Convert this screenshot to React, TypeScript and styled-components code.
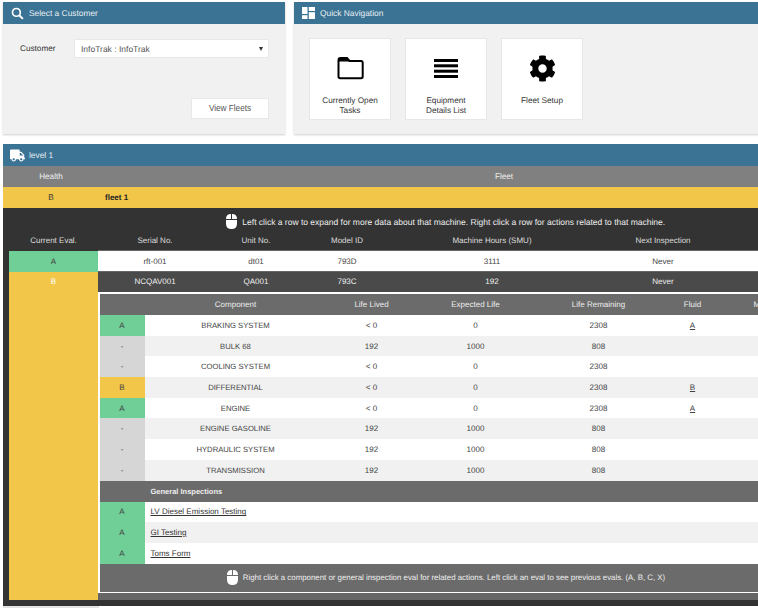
import styled, { createGlobalStyle } from 'styled-components'
import { FaCog, FaTruck } from 'react-icons/fa'

type Grade = 'A' | 'B' | '-'

const gradeColors: Record<Grade, string> = {
  A: '#6fcf97',
  B: '#f2c649',
  '-': '#d6d6d6',
}

const components = [
  { eval: 'A' as Grade, name: 'BRAKING SYSTEM', lived: '< 0', expected: '0', remaining: '2308', fluid: 'A' },
  { eval: '-' as Grade, name: 'BULK 68', lived: '192', expected: '1000', remaining: '808', fluid: '' },
  { eval: '-' as Grade, name: 'COOLING SYSTEM', lived: '< 0', expected: '0', remaining: '2308', fluid: '' },
  { eval: 'B' as Grade, name: 'DIFFERENTIAL', lived: '< 0', expected: '0', remaining: '2308', fluid: 'B' },
  { eval: 'A' as Grade, name: 'ENGINE', lived: '< 0', expected: '0', remaining: '2308', fluid: 'A' },
  { eval: '-' as Grade, name: 'ENGINE GASOLINE', lived: '192', expected: '1000', remaining: '808', fluid: '' },
  { eval: '-' as Grade, name: 'HYDRAULIC SYSTEM', lived: '192', expected: '1000', remaining: '808', fluid: '' },
  { eval: '-' as Grade, name: 'TRANSMISSION', lived: '192', expected: '1000', remaining: '808', fluid: '' },
]

const inspections = ['LV Diesel Emission Testing', 'GI Testing', 'Toms Form']

const GlobalStyle = createGlobalStyle`
  html, body {
    margin: 0;
    padding: 0;
    width: 758px;
    height: 608px;
    overflow: hidden;
    background: #fff;
    font-family: "Liberation Sans", Arial, sans-serif;
    font-size: 8.2px;
    color: #333;
    text-rendering: geometricPrecision;
  }
`

const Page = styled.div`
  width: 800px;
  height: 608px;
  padding: 2px 0 0 3px;
  box-sizing: border-box;
  overflow: hidden;
`

const TopRow = styled.div`
  display: flex;
  gap: 9px;
  margin-bottom: 10px;
`

const Panel = styled.section<{ $width: number }>`
  width: ${(p) => p.$width}px;
  height: 132px;
  background: #f1f1f1;
  box-shadow: 0 1px 2px rgba(0, 0, 0, 0.2);
`

const PanelHeader = styled.header`
  height: 22px;
  background: #3b7394;
  color: #e6eef3;
  display: flex;
  align-items: center;
  gap: 5px;
  padding-left: 8px;
  font-size: 8.4px;
`

const CustomerBody = styled.div`
  display: grid;
  grid-template-columns: 45px 195px;
  column-gap: 9px;
  padding: 15px 0 0 17px;
`

const FieldLabel = styled.label`
  line-height: 19px;
`

const SelectBox = styled.div`
  height: 19px;
  background: #fff;
  border: 1px solid #e8e8e8;
  box-sizing: border-box;
  display: flex;
  align-items: center;
  justify-content: space-between;
  padding: 0 5px 0 6px;
  color: #555;
  font-size: 8.5px;
`

const Caret = styled.span`
  width: 0;
  height: 0;
  border-left: 2.5px solid transparent;
  border-right: 2.5px solid transparent;
  border-top: 4px solid #333;
`

const ViewButton = styled.button`
  grid-column: 2;
  justify-self: end;
  width: 78px;
  height: 21px;
  margin-top: 40px;
  background: #fff;
  border: 1px solid #e8e8e8;
  font: inherit;
  color: #555;
  padding: 0;
`

const NavBody = styled.div`
  display: flex;
  gap: 14px;
  padding: 14px 0 0 15px;
`

const NavCard = styled.div`
  width: 82px;
  height: 82px;
  box-sizing: border-box;
  background: #fff;
  border: 1px solid #e6e6e6;
  display: flex;
  flex-direction: column;
  align-items: center;
  color: #333;
  text-align: center;
  line-height: 10px;
`

const NavIcon = styled.div`
  height: 28px;
  margin: 15px 0 14px;
  display: flex;
  align-items: center;
  justify-content: center;
  color: #000;
`

const FleetPanel = styled.section`
  width: 790px;
  height: 462px;
  position: relative;
`

const LevelHeader = styled(PanelHeader)`
  gap: 4px;
  padding-left: 7px;
`

const HealthRow = styled.div<{ $bg: string; $color: string }>`
  display: grid;
  grid-template-columns: 96px 1fr;
  height: 21px;
  background: ${(p) => p.$bg};
  color: ${(p) => p.$color};
  align-items: center;
  text-align: center;
`

const FleetTitle = styled.span`
  font-weight: bold;
  font-size: 8px;
  text-align: left;
  padding-left: 6px;
  color: #222;
`

const FleetHeading = styled.span`
  padding-left: 116px;
`

const DarkArea = styled.div`
  background: #333;
  padding: 0 0 6px 6px;
  height: 398px;
  box-sizing: border-box;
  display: grid;
  grid-template-columns: 89px 1fr;
  grid-template-rows: 43px 20.5px 20.5px 1fr;
  font-size: 8px;
`

const Notice = styled.div`
  height: 27px;
  display: flex;
  align-items: center;
  justify-content: center;
  gap: 5px;
  color: #eee;
  padding-left: 68px;
  font-size: 8.5px;
`

const HeadWrap = styled.div`
  grid-column: 1 / -1;
  display: flex;
  flex-direction: column;
`

const MachineCols = styled.div`
  display: grid;
  grid-template-columns: 114px 88px 94px 196px 146px 1fr;
  align-items: center;
  text-align: center;
`

const MachineHeadRow = styled.div`
  display: grid;
  grid-template-columns: 89px 1fr;
  height: 10px;
  align-items: center;
  text-align: center;
  color: #ddd;
`

const MachineRow = styled(MachineCols)<{ $dark?: boolean }>`
  height: 100%;
  background: ${(p) => (p.$dark ? '#4a4a4a' : '#fff')};
  color: ${(p) => (p.$dark ? '#eee' : '#444')};
  box-shadow: 0 -1px 0 #666;
`

const GradeCell = styled.div<{ $grade: Grade }>`
  background: ${(p) => gradeColors[p.$grade]};
  display: flex;
  align-items: center;
  justify-content: center;
  color: #444;
`

const BSideCell = styled.div`
  background: #f2c649;
  grid-row: 3 / 5;
  color: #fff;
  text-align: center;
  line-height: 20px;
`

const Detail = styled.div`
  background: #666;
  display: flex;
  flex-direction: column;
  padding-bottom: 7px;
`

const DetailFrame = styled.div`
  background: #6b6b6b;
  border-top: 2px solid #fff;
  border-left: 2px solid #fff;
  border-bottom: 1.5px solid #fff;
  margin-left: -0.5px;
  flex: 1;
  display: flex;
  flex-direction: column;
`

const CompCols = styled.div`
  display: grid;
  grid-template-columns: 45px 182px 90px 118px 128px 60px 92px;
  align-items: center;
  text-align: center;
  height: 20.7px;
`

const CompHead = styled(CompCols)`
  height: 21px;
  color: #eee;
  background: #6b6b6b;
`

const CompRow = styled(CompCols)<{ $even: boolean }>`
  background: ${(p) => (p.$even ? '#f1f1f1' : '#fff')};
  color: #444;

  & > ${GradeCell} {
    height: 100%;
  }
`

const CompName = styled.span`
  font-size: 7.7px;
`

const FluidLink = styled.span`
  text-decoration: underline;
`

const InspectHead = styled.div`
  height: 21px;
  background: #6b6b6b;
  color: #eee;
  font-weight: bold;
  font-size: 7.5px;
  display: flex;
  align-items: center;
  padding-left: 51px;
`

const InspectRow = styled.div<{ $even: boolean }>`
  display: grid;
  grid-template-columns: 45px 1fr;
  height: 20.7px;
  align-items: center;
  background: ${(p) => (p.$even ? '#f1f1f1' : '#fff')};

  & > ${GradeCell} {
    height: 100%;
  }
`

const InspectLink = styled.a`
  padding-left: 6px;
  color: #333;
  text-decoration: underline;
`

const DetailFooter = styled.div`
  flex: 1;
  background: #6b6b6b;
  color: #eee;
  display: flex;
  align-items: center;
  justify-content: center;
  gap: 5px;
  padding-right: 22px;
  font-size: 7.87px;
`

const StubBar = styled.div`
  position: absolute;
  left: 0;
  bottom: -2px;
  width: 96px;
  height: 2px;
  background: #e2e2e2;
`

const SearchIcon = () => (
  <svg width="13" height="13" viewBox="0 0 14 14" fill="none">
    <circle cx="5.8" cy="5.8" r="4.2" stroke="#fff" strokeWidth="1.8" />
    <path d="M8.8 8.8 L12.8 12.8" stroke="#fff" strokeWidth="2.2" />
  </svg>
)

const QuickIcon = () => (
  <svg width="13" height="12" viewBox="0 0 13 12" fill="#fff">
    <rect x="0" y="0" width="5.5" height="7" />
    <rect x="6.8" y="0" width="6.2" height="4" />
    <rect x="0" y="8.2" width="5.5" height="3.8" />
    <rect x="6.8" y="5.2" width="6.2" height="6.8" />
  </svg>
)

const FolderIcon = () => (
  <svg width="27" height="23" viewBox="0 0 27 23" fill="none">
    <path d="M1.5 5 V3 Q1.5 1 3.5 1 H10 L12.5 4 H24 Q25.7 4 25.7 6 V19.5 Q25.7 21.3 24 21.3 H3.3 Q1.5 21.3 1.5 19.5 Z" stroke="#000" strokeWidth="2" />
    <path d="M1.5 3 Q1.5 1 3.5 1 H10 L12.5 4.5 H1.5 Z" fill="#000" />
  </svg>
)

const ListIcon = () => (
  <svg width="24" height="19" viewBox="0 0 24 19" fill="#000">
    <rect x="0" y="0" width="24" height="3" />
    <rect x="0" y="5.3" width="24" height="3" />
    <rect x="0" y="10.7" width="24" height="3" />
    <rect x="0" y="16" width="24" height="3" />
  </svg>
)

const MouseIcon = () => (
  <svg width="11" height="15" viewBox="0 0 11 15">
    <path d="M0 5 Q0 0 5 0 V5 Z" fill="#fff" />
    <path d="M6 0 Q11 0 11 5 H6 Z" fill="#fff" />
    <path d="M0 6 H11 V9.5 Q11 15 5.5 15 Q0 15 0 9.5 Z" fill="#fff" />
  </svg>
)

export default function App() {
  return (
    <>
      <GlobalStyle />
      <Page>
        <TopRow>
          <Panel $width={282}>
            <PanelHeader>
              <SearchIcon />
              <span>Select a Customer</span>
            </PanelHeader>
            <CustomerBody>
              <FieldLabel>Customer</FieldLabel>
              <SelectBox>
                InfoTrak : InfoTrak
                <Caret />
              </SelectBox>
              <ViewButton>View Fleets</ViewButton>
            </CustomerBody>
          </Panel>
          <Panel $width={500}>
            <PanelHeader>
              <QuickIcon />
              <span>Quick Navigation</span>
            </PanelHeader>
            <NavBody>
              <NavCard>
                <NavIcon>
                  <FolderIcon />
                </NavIcon>
                Currently Open
                <br />
                Tasks
              </NavCard>
              <NavCard>
                <NavIcon>
                  <ListIcon />
                </NavIcon>
                Equipment
                <br />
                Details List
              </NavCard>
              <NavCard>
                <NavIcon>
                  <FaCog size={27} />
                </NavIcon>
                Fleet Setup
              </NavCard>
            </NavBody>
          </Panel>
        </TopRow>
        <FleetPanel>
          <LevelHeader>
            <FaTruck size={15} color="#fff" />
            <span>level 1</span>
          </LevelHeader>
          <HealthRow $bg="#808080" $color="#eee">
            <span>Health</span>
            <FleetHeading>Fleet</FleetHeading>
          </HealthRow>
          <HealthRow $bg="#f2c649" $color="#333">
            <span>B</span>
            <FleetTitle>fleet 1</FleetTitle>
          </HealthRow>
          <DarkArea>
            <HeadWrap>
              <Notice>
                <MouseIcon />
                Left click a row to expand for more data about that machine. Right click a row for actions related to that machine.
              </Notice>
              <MachineHeadRow>
                <span>Current Eval.</span>
                <MachineCols>
                  <span>Serial No.</span>
                  <span>Unit No.</span>
                  <span>Model ID</span>
                  <span>Machine Hours (SMU)</span>
                  <span>Next Inspection</span>
                </MachineCols>
              </MachineHeadRow>
            </HeadWrap>
            <GradeCell $grade="A">A</GradeCell>
            <MachineRow>
              <span>rft-001</span>
              <span>dt01</span>
              <span>793D</span>
              <span>3111</span>
              <span>Never</span>
            </MachineRow>
            <BSideCell>B</BSideCell>
            <MachineRow $dark>
              <span>NCQAV001</span>
              <span>QA001</span>
              <span>793C</span>
              <span>192</span>
              <span>Never</span>
            </MachineRow>
            <Detail>
              <DetailFrame>
                <CompHead>
                  <span />
                  <span>Component</span>
                  <span>Life Lived</span>
                  <span>Expected Life</span>
                  <span>Life Remaining</span>
                  <span>Fluid</span>
                  <span>Machine</span>
                </CompHead>
                {components.map((c, i) => (
                  <CompRow key={c.name} $even={i % 2 === 1}>
                    <GradeCell $grade={c.eval}>{c.eval}</GradeCell>
                    <CompName>{c.name}</CompName>
                    <span>{c.lived}</span>
                    <span>{c.expected}</span>
                    <span>{c.remaining}</span>
                    <span>{c.fluid && <FluidLink>{c.fluid}</FluidLink>}</span>
                    <span />
                  </CompRow>
                ))}
                <InspectHead>General Inspections</InspectHead>
                {inspections.map((name, i) => (
                  <InspectRow key={name} $even={i % 2 === 1}>
                    <GradeCell $grade="A">A</GradeCell>
                    <InspectLink>{name}</InspectLink>
                  </InspectRow>
                ))}
                <DetailFooter>
                  <MouseIcon />
                  Right click a component or general inspection eval for related actions. Left click an eval to see previous evals. (A, B, C, X)
                </DetailFooter>
              </DetailFrame>
            </Detail>
          </DarkArea>
          <StubBar />
        </FleetPanel>
      </Page>
    </>
  )
}
